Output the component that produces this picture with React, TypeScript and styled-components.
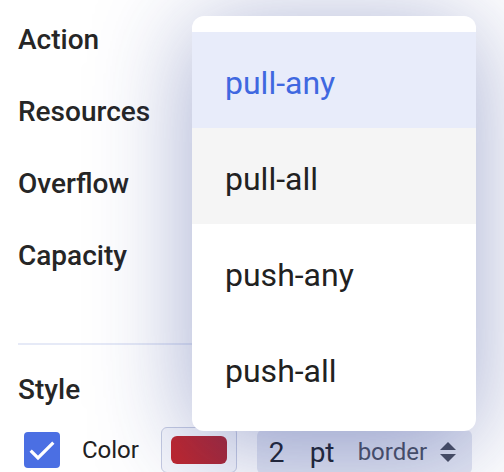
import React from 'react'
import styled, { createGlobalStyle } from 'styled-components'

const GlobalStyle = createGlobalStyle`
    html, body {
        margin: 0;
        padding: 0;
        background: #ffffff;
        font-family: Roboto, 'Noto Sans', sans-serif;
    }
`

const Page = styled.div`
    position: relative;
    width: 504px;
    height: 472px;
    overflow: hidden;
    background: #ffffff;
`

const Panel = styled.div`
    padding: 4px 32px 0 18px;
`

const FieldRow = styled.div`
    height: 72px;
    display: flex;
    align-items: center;
`

const Label = styled.div`
    font-size: 28px;
    font-weight: 500;
    color: #262626;
    line-height: 36px;
`

const Divider = styled.div`
    height: 2px;
    margin-top: 51px;
    background: #e6eaf7;
`

const Heading = styled(Label)`
    margin-top: 27px;
`

const Controls = styled.div`
    margin-top: 19px;
    height: 46px;
    display: flex;
    align-items: center;
`

const Checkbox = styled.div`
    width: 36px;
    height: 36px;
    margin-left: 6px;
    border-radius: 4px;
    background: #4b6fe3;
    display: flex;
    align-items: center;
    justify-content: center;
`

const ControlLabel = styled.span`
    margin-left: 22px;
    font-size: 24px;
    color: #212121;
`

const SwatchButton = styled.div`
    margin-left: 22px;
    width: 76px;
    height: 46px;
    box-sizing: border-box;
    border: 1.5px solid #c7cde2;
    border-radius: 6px;
    background: #f7f8fc;
    display: flex;
    align-items: center;
    justify-content: center;
`

const Swatch = styled.div<{ color: string }>`
    width: 56px;
    height: 28px;
    border-radius: 6px;
    background: ${p => p.color};
`

const NumberInput = styled.div`
    margin-left: 20px;
    width: 216px;
    height: 44px;
    margin-top: 4px;
    box-sizing: border-box;
    border-radius: 6px;
    background: #e3e6f2;
    display: flex;
    align-items: center;
    padding-left: 12px;
    color: #22252e;
`

const Value = styled.span`
    font-size: 28px;
    width: 41px;
`

const Unit = styled.span`
    font-size: 28px;
    width: 48px;
`

const Kind = styled.span`
    font-size: 24px;
    color: #4d5263;
`

const Spinner = styled.svg`
    margin-left: 12px;
`

const Menu = styled.div`
    position: absolute;
    left: 192px;
    top: 16px;
    width: 284px;
    padding: 16px 0 15px;
    background: #ffffff;
    border-radius: 12px;
    box-shadow: 0 12px 100px rgba(30, 50, 140, 0.42);
`

const MenuItem = styled.div<{ selected?: boolean; hovered?: boolean }>`
    height: 96px;
    box-sizing: border-box;
    padding: 5px 0 0 33px;
    display: flex;
    align-items: center;
    font-size: 32px;
    color: ${p => (p.selected ? '#3f68e0' : '#212121')};
    background: ${p => (p.selected ? '#e8ecfa' : p.hovered ? '#f5f5f5' : '#ffffff')};
`

const fields = ['Action', 'Resources', 'Overflow', 'Capacity']
const options = ['pull-any', 'pull-all', 'push-any', 'push-all']

export default function App() {
    return (
        <Page>
            <GlobalStyle />
            <Panel>
                {fields.map(f => (
                    <FieldRow key={f}>
                        <Label>{f}</Label>
                    </FieldRow>
                ))}
                <Divider />
                <Heading>Style</Heading>
                <Controls>
                    <Checkbox>
                        <svg width="32" height="32" viewBox="0 0 24 24">
                            <path d="M3.5 12.5l5.5 5.5L20.5 6.5" fill="none" stroke="#fff" strokeWidth="2.4" />
                        </svg>
                    </Checkbox>
                    <ControlLabel>Color</ControlLabel>
                    <SwatchButton>
                        <Swatch color="linear-gradient(90deg, #c2262c, #ad2834)" />
                    </SwatchButton>
                    <NumberInput>
                        <Value>2</Value>
                        <Unit>pt</Unit>
                        <Kind>border</Kind>
                        <Spinner width="18" height="24" viewBox="0 0 18 24">
                            <path d="M9 2L17 10H1z" fill="#4a4f60" />
                            <path d="M9 22L17 14H1z" fill="#4a4f60" />
                        </Spinner>
                    </NumberInput>
                </Controls>
            </Panel>
            <Menu>
                {options.map((o, i) => (
                    <MenuItem key={o} selected={i === 0} hovered={i === 1}>
                        {o}
                    </MenuItem>
                ))}
            </Menu>
        </Page>
    )
}
